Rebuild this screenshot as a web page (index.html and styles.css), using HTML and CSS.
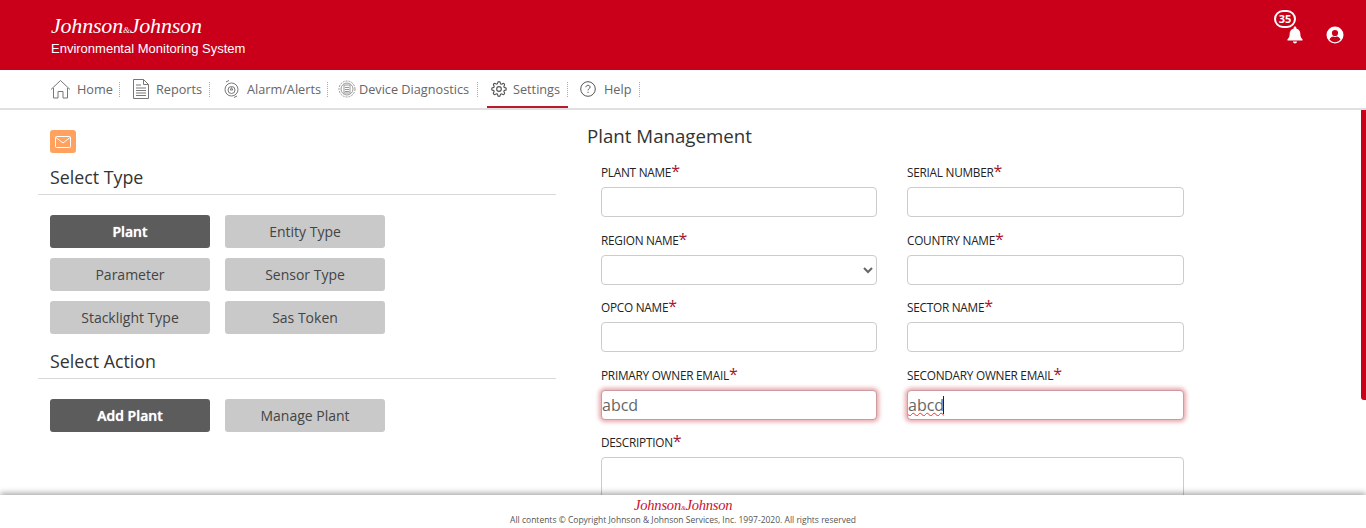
FILE: index.html
```html
<!DOCTYPE html>
<html lang="en">
<head>
    <meta charset="UTF-8">
    <meta name="viewport" content="width=device-width, initial-scale=1.0">
    <title>Environmental Monitoring System</title>
    <link rel="stylesheet" href="styles.css">
</head>
<body>
    <header class="top-bar">
        <div class="brand">
            <div class="logo">Johnson<small>&amp;</small>Johnson</div>
            <div class="app-name">Environmental Monitoring System</div>
        </div>
        <div class="top-icons">
            <div class="bell">
                <span class="badge">35</span>
                <svg width="18" height="18" viewBox="0 0 18 18"><path fill="#fff" d="M9 0.5c-.8 0-1.3.6-1.3 1.3v.6C5.100 3 3.700 5.100 3.700 7.500c0 3.500-1 4.500-2.100 5.700-.5.600-.1 1.400.6 1.400h13.600c.7 0 1.100-.8.6-1.400-1.100-1.200-2.100-2.200-2.100-5.700 0-2.400-1.400-4.500-4-5.100v-.6C10.300 1.100 9.800.5 9 .5zM7 15.500c0 1.100.9 2 2 2s2-.9 2-2z"/></svg>
            </div>
            <svg class="user" width="18" height="18" viewBox="0 0 18 18"><circle cx="9" cy="9" r="8.500" fill="#fff"/><circle cx="9" cy="7" r="3.100" fill="#ca001b"/><path fill="#ca001b" d="M3.500 13.500c.8-2 2.500-3 3.500-3 .7.300 1.300.5 2 .5s1.300-.2 2-.5c1 0 2.700 1 3.500 3-1.300 1.600-3.300 2.700-5.500 2.700s-4.200-1.100-5.500-2.700z"/></svg>
        </div>
    </header>

    <nav class="nav">
        <a class="nav-item nav-home">
            <svg width="21" height="20" viewBox="0 0 21 20" fill="none" stroke="#777" stroke-width="1"><path d="M1 10.500 10.500 1.500 20 10.500M3.500 9v10h4.500v-6.500h5V19h4.500V9"/></svg>
            Home
        </a>
        <a class="nav-item nav-reports">
            <svg width="16" height="20" viewBox="0 0 16 20" fill="none" stroke="#777" stroke-width="1"><path d="M.5.500h10l5 5v14H.500zM10.500.500v5h5M3 6h5M3 9h10M3 11.500h10M3 14h10M3 16.500h10"/></svg>
            Reports
        </a>
        <a class="nav-item nav-alarm">
            <svg width="17" height="20" viewBox="0 0 17 20" fill="none" stroke="#777" stroke-width="1"><circle cx="8.500" cy="10.500" r="6.500"/><circle cx="8.500" cy="11" r="3.500"/><path d="M3 3 6 1.500M11 18.500l3-1.500M8.500 8.500l-1.200 2.500h2.400z"/></svg>
            Alarm/Alerts
        </a>
        <a class="nav-item nav-device">
            <svg width="18" height="18" viewBox="0 0 18 18" fill="none" stroke="#999" stroke-width="1"><circle cx="9" cy="9" r="8" stroke-dasharray="2 1"/><circle cx="9" cy="9" r="6"/><rect x="6" y="5" width="6" height="8"/><path d="M7 7.500h4M7 9.500h4M7 11.500h4"/></svg>
            Device Diagnostics
        </a>
        <a class="nav-item nav-settings active">
            <svg width="16" height="16" viewBox="0 0 24 24" fill="none" stroke="#555" stroke-width="1.700"><circle cx="12" cy="12" r="3.500"/><path d="M19.400 15a1.700 1.700 0 0 0 .3 1.800l.1.100a2 2 0 1 1-2.900 2.900l-.1-.1a1.700 1.700 0 0 0-2.800 1.200V21a2 2 0 1 1-4 0v-.1a1.700 1.700 0 0 0-2.900-1.200l-.1.100a2 2 0 1 1-2.800-2.900l.1-.1a1.700 1.700 0 0 0-1.200-2.800H3a2 2 0 1 1 0-4h.1a1.700 1.700 0 0 0 1.200-2.900l-.1-.1a2 2 0 1 1 2.900-2.800l.1.100a1.700 1.700 0 0 0 2.800-1.200V3a2 2 0 1 1 4 0v.1a1.700 1.700 0 0 0 2.900 1.200l.1-.1a2 2 0 1 1 2.800 2.900l-.1.100a1.700 1.700 0 0 0 1.200 2.800h.1a2 2 0 1 1 0 4h-.1a1.700 1.700 0 0 0-1.500 1z"/></svg>
            Settings
        </a>
        <a class="nav-item nav-help">
            <svg width="16" height="16" viewBox="0 0 16 16" fill="none" stroke="#555" stroke-width="1"><circle cx="8" cy="8" r="7.300"/><path d="M5.900 6.200C6 5 6.900 4.300 8 4.300c1.200 0 2.100.8 2.100 1.800 0 1.500-2.100 1.600-2.100 3.300M8 10.800v1.200"/></svg>
            Help
        </a>
    </nav>

    <main class="content">
        <section class="left-panel">
            <div class="mail-btn">
                <svg width="16" height="12" viewBox="0 0 16 12" fill="none" stroke="#fff" stroke-width="1"><rect x=".5" y=".5" width="15" height="11" rx="1"/><path d="M1 1.500 8 7l7-5.500"/></svg>
            </div>
            <h3 class="panel-title">Select Type</h3>
            <div class="btn-grid">
                <button class="pick selected">Plant</button>
                <button class="pick">Entity Type</button>
                <button class="pick">Parameter</button>
                <button class="pick">Sensor Type</button>
                <button class="pick">Stacklight Type</button>
                <button class="pick">Sas Token</button>
            </div>
            <h3 class="panel-title action-title">Select Action</h3>
            <div class="btn-grid">
                <button class="pick selected">Add Plant</button>
                <button class="pick">Manage Plant</button>
            </div>
        </section>

        <section class="right-panel">
            <h2 class="form-title">Plant Management</h2>
            <form class="plant-form">
                <div class="form-group">
                    <label>PLANT NAME<span class="req">*</span></label>
                    <input type="text">
                </div>
                <div class="form-group">
                    <label>SERIAL NUMBER<span class="req">*</span></label>
                    <input type="text">
                </div>
                <div class="form-group">
                    <label>REGION NAME<span class="req">*</span></label>
                    <select></select>
                </div>
                <div class="form-group">
                    <label>COUNTRY NAME<span class="req">*</span></label>
                    <input type="text">
                </div>
                <div class="form-group">
                    <label>OPCO NAME<span class="req">*</span></label>
                    <input type="text">
                </div>
                <div class="form-group">
                    <label>SECTOR NAME<span class="req">*</span></label>
                    <input type="text">
                </div>
                <div class="form-group">
                    <label>PRIMARY OWNER EMAIL<span class="req">*</span></label>
                    <input type="text" class="invalid" value="abcd">
                </div>
                <div class="form-group">
                    <label>SECONDARY OWNER EMAIL<span class="req">*</span></label>
                    <div class="input-wrap">
                        <input type="text" class="invalid misspelled" value="abcd">
                        <span class="caret"></span>
                    </div>
                </div>
                <div class="form-group form-wide">
                    <label>DESCRIPTION<span class="req">*</span></label>
                    <textarea></textarea>
                </div>
            </form>
        </section>
        <div class="scroll-thumb"></div>
    </main>

    <footer class="footer">
        <div class="logo logo-small">Johnson<small>&amp;</small>Johnson</div>
        <div class="copy">All contents © Copyright Johnson &amp; Johnson Services, Inc. 1997-2020. All rights reserved</div>
    </footer>
</body>
</html>
```

FILE: styles.css
```css
* {
    box-sizing: border-box;
}
html, body {
    height: 100%;
}
body {
    margin: 0;
    display: flex;
    flex-direction: column;
    overflow: hidden;
    background: #fff;
    font-family: "Open Sans", sans-serif;
    color: #333;
}
.top-bar {
    height: 70px;
    flex: none;
    background-color: #ca001b;
    color: #fff;
    display: flex;
    justify-content: space-between;
    padding: 12px 22px 0 51px;
}
.logo {
    font-family: "Liberation Serif", serif;
    font-style: italic;
    font-size: 22px;
    height: 28px;
    line-height: 28px;
    letter-spacing: -0.2px;
}
.logo small {
    font-size: 9px;
}
.app-name {
    font-family: "Liberation Sans", Arial, sans-serif;
    font-size: 13px;
    line-height: 18px;
}
.top-icons {
    display: flex;
    align-items: flex-start;
    gap: 22px;
    padding-top: 14px;
}
.bell {
    position: relative;
    width: 18px;
    height: 18px;
}
.badge {
    position: absolute;
    left: -12px;
    top: -16px;
    width: 22px;
    height: 18px;
    border: 2px solid #fff;
    border-radius: 9px;
    background: #ca001b;
    font-size: 11px;
    font-weight: 700;
    line-height: 14px;
    text-align: center;
}

/* nav */
.nav {
    height: 40px;
    flex: none;
    display: flex;
    align-items: stretch;
    padding-left: 50px;
    border-bottom: 2px solid #e0e0e0;
    font-size: 12.700px;
    color: #666;
}
.nav-item {
    display: flex;
    align-items: center;
    gap: 6px;
    height: 38px;
    position: relative;
}
.nav-item::after {
    content: "";
    position: absolute;
    right: 0;
    top: 12px;
    height: 15px;
    border-right: 1px dotted #aaa;
}
.nav-home { width: 70px; }
.nav-reports { width: 90px; padding-left: 13px; gap: 7px; }
.nav-alarm { width: 118px; padding-left: 13px; gap: 7px; }
.nav-device { width: 150px; padding-left: 10px; gap: 3px; }
.nav-settings { width: 81px; padding-left: 4px; margin-left: 9px; gap: 6px; }
.nav-help { width: 72px; padding-left: 12px; gap: 8px; }
.nav-settings.active {
    box-shadow: inset 0 -2px 0 #b71c2b;
}

/* main area */
.content {
    flex: 1;
    min-height: 0;
    overflow: hidden;
    position: relative;
    display: flex;
}
.left-panel {
    width: 518px;
    margin-left: 38px;
    flex: none;
    padding-top: 20px;
}
.mail-btn {
    width: 26px;
    height: 23px;
    margin-left: 12px;
    border-radius: 3px;
    background: #ffa25f;
    display: flex;
    align-items: center;
    justify-content: center;
}
.panel-title {
    margin: 11px 0 20px;
    padding: 0 0 4px 12px;
    height: 31px;
    border-bottom: 1px solid #d9d9d9;
    font-size: 17.800px;
    font-weight: 400;
    line-height: 27px;
    color: #333;
}
.action-title {
    margin-top: 14px;
}
.btn-grid {
    display: grid;
    grid-template-columns: 160px 160px;
    column-gap: 15px;
    row-gap: 10px;
    padding-left: 12px;
}
.pick {
    height: 33px;
    border: none;
    border-radius: 3px;
    background: #c9c9c9;
    color: #444;
    font-family: inherit;
    font-size: 14px;
    padding: 0;
}
.pick.selected {
    background: #5c5c5c;
    color: #fff;
    font-weight: 600;
    text-shadow: 0 0 1px #fff;
}
.right-panel {
    margin-left: 31px;
    flex: none;
    padding-top: 12px;
}
.form-title {
    margin: 0;
    font-size: 18.700px;
    font-weight: 400;
    line-height: 28px;
    color: #333;
}
.plant-form {
    display: grid;
    grid-template-columns: 276px 277px;
    column-gap: 30px;
    padding-left: 14px;
    padding-top: 12px;
}
.form-wide {
    grid-column: 1 / -1;
}
.form-group {
    height: 67.500px;
}
.form-group label {
    display: block;
    height: 25px;
    font-size: 11.800px;
    font-weight: 500;
    line-height: 20px;
    letter-spacing: -0.25px;
    color: #222;
}
.req {
    color: #a5162b;
    font-size: 16px;
    font-weight: 400;
    line-height: 10px;
}
.form-group input, .form-group select, .form-group textarea {
    display: block;
    width: 100%;
    height: 30px;
    padding: 0;
    border: 1px solid #ccc;
    border-radius: 4px;
    background: #fff;
    font-family: inherit;
    font-size: 16px;
    color: #666;
    outline: none;
}
.form-group textarea {
    height: 70px;
    resize: none;
}
.form-group input.invalid {
    border-color: #cf9a9f;
    box-shadow: 0 0 4px 2px rgba(200, 60, 70, 0.45);
}
.misspelled {
    text-decoration: underline wavy #e33 1px;
}
.input-wrap {
    position: relative;
}
.caret {
    position: absolute;
    left: 36px;
    top: 6px;
    height: 18px;
    border-left: 1px solid #222;
}
.scroll-thumb {
    position: absolute;
    right: 0;
    top: 0;
    width: 5px;
    height: 290px;
    background: #ca001b;
    border-radius: 0 0 0 3px;
}

/* footer */
.footer {
    height: 33px;
    flex: none;
    background: #fff;
    box-shadow: 0 -2px 6px rgba(0, 0, 0, 0.35);
    position: relative;
    text-align: center;
}
.logo-small {
    color: #c8102e;
    font-size: 14.500px;
    height: 19px;
    line-height: 20px;
    width: 100px;
    margin: 0 0 0 634px;
    text-align: left;
    white-space: nowrap;
}
.logo-small small {
    font-size: 6px;
}
.copy {
    font-size: 8.500px;
    line-height: 12px;
    color: #555;
}
```
